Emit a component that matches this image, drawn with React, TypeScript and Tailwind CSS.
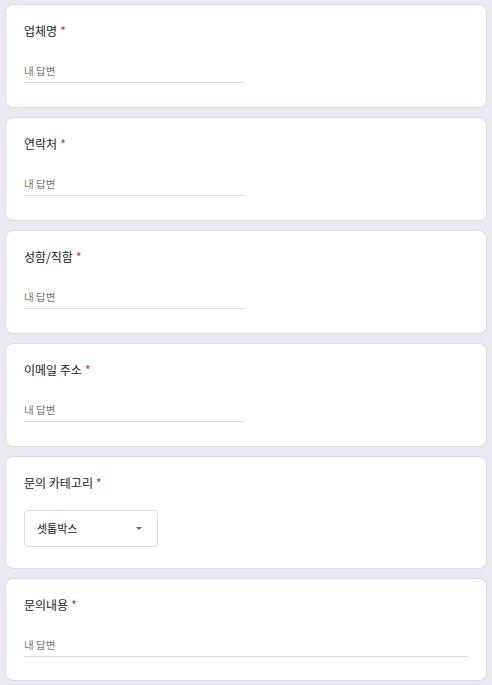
const font = { fontFamily: '"Noto Sans CJK KR", "Noto Sans", sans-serif' };

type Field = { label: string; kind: 'short' | 'long' | 'select' };

const fields: Field[] = [
  { label: '업체명', kind: 'short' },
  { label: '연락처', kind: 'short' },
  { label: '성함/직함', kind: 'short' },
  { label: '이메일 주소', kind: 'short' },
  { label: '문의 카테고리', kind: 'select' },
  { label: '문의내용', kind: 'long' },
];

export default function App() {
  return (
    <div className="min-h-[685px] w-[492px] bg-[#ede7f6] px-[5px] pt-[4px] pb-[4px]" style={font}>
      <div className="flex flex-col gap-[9px]">
        {fields.map((f) => (
          <Card key={f.label} field={f} />
        ))}
      </div>
    </div>
  );
}

function Card({ field }: { field: Field }) {
  return (
    <div
      className={
        'rounded-[8px] border border-[#dadce0] bg-white px-[18px] pt-[17px] ' +
        (field.kind === 'select' ? 'pb-[21px]' : field.kind === 'long' ? 'pb-[23px]' : 'pb-[24px]')
      }
    >
      <div className="text-[12px] leading-[18px] text-[#202124]">
        {field.label}
        <span className="ml-[3px] text-[#d93025]">*</span>
      </div>
      {field.kind === 'select' ? (
        <div className="mt-[18px] flex h-[37px] w-[134px] items-center justify-between rounded-[4px] border border-[#dadce0] pl-[12px] pr-[15px]">
          <span className="text-[11px] text-[#202124]">셋톱박스</span>
          <svg width="6" height="3" viewBox="0 0 6 3">
            <path d="M0 0 L6 0 L3 3 Z" fill="#5f6368" />
          </svg>
        </div>
      ) : (
        <div
          className={
            'mt-[23px] border-b border-[#dadce0] pb-[3px] text-[10.5px] leading-[16px] text-[#757575] ' +
            (field.kind === 'long' ? 'w-full' : 'w-[221px]')
          }
        >
          내 답변
        </div>
      )}
    </div>
  );
}
